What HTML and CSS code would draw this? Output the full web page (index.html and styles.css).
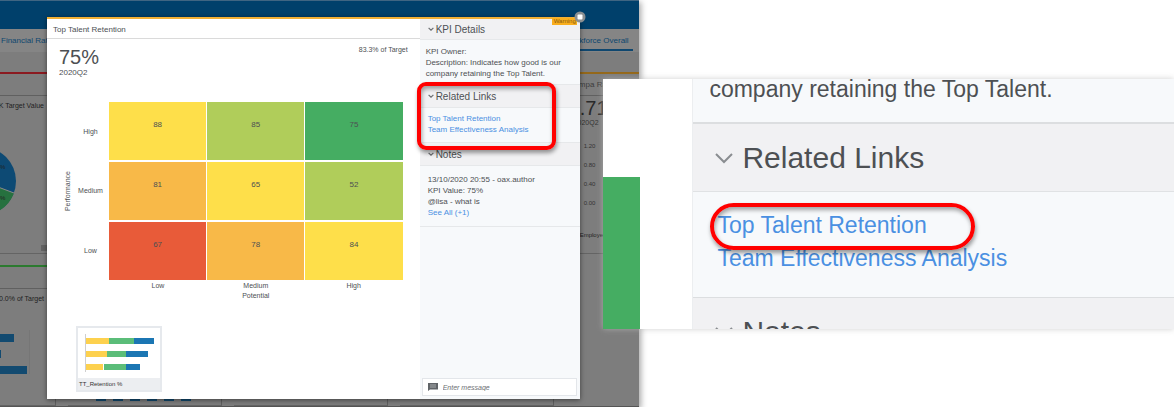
FILE: index.html
```html
<!DOCTYPE html>
<html lang="en">
<head>
<meta charset="utf-8">
<title>Top Talent Retention</title>
<link rel="stylesheet" href="styles.css">
</head>
<body>
<main class="stage">
  <section class="dashboard">
    <header class="topbar"></header>
    <nav class="tabs">
      <a class="tab" href="#">Financial Ratios</a>
      <a class="tab tab-active" href="#">Workforce Overall</a>
    </nav>
    <div class="cards">
      <article class="card card-red">
        <div class="card-title"></div>
        <p class="card-note">K Target Value</p>
        <svg class="pie" viewBox="0 0 34 64" width="34" height="64">
          <circle cx="-18" cy="32" r="34" fill="#0d4a74"/>
          <path d="M-18 32 L14 44 A34 34 0 0 1 -6 64 L-18 66Z" fill="#26713f"/>
          <path d="M-18 32 L14 44" stroke="#8a8a8a"/>
          <text x="0" y="20" font-size="6" fill="#222">%</text>
          <text x="0" y="51" font-size="6" fill="#222">%</text>
        </svg>
        <svg class="menu-icon" viewBox="0 0 6 6" width="6" height="6"><path d="M0 1H6M0 3H6M0 5H6" stroke="#4c4c4c"/></svg>
      </article>
      <article class="card card-amber">
        <div class="card-title">Compa Ratio</div>
        <p class="card-value">0.71</p>
        <p class="card-period">2020Q2</p>
        <div class="axis"><span>1.20</span><span>0.80</span><span>0.40</span><span>0.00</span></div>
        <p class="axis-name">Employee</p>
      </article>
    </div>
    <div class="cards cards-low">
      <article class="card card-green">
        <div class="card-title"></div>
        <p class="card-note">00.0% of Target</p>
        <svg class="bars" viewBox="0 0 46 44" width="46" height="44">
          <path d="M29.500 0V44" stroke="#767676"/>
          <path d="M0 4H14V12H0ZM0 20H1V28H0ZM0 36H27V44H0Z" fill="#124a70"/>
        </svg>
      </article>
      <article class="card card-green card-columns">
        <svg viewBox="0 0 140 4" width="140" height="4"><path d="M28 0H38V3H28ZM45 0H55V3H45ZM62 0H72V3H62ZM79 0H89V3H79ZM96 0H106V3H96ZM113 0H123V3H113Z" fill="#124a70"/></svg>
      </article>
      <article class="card card-green"></article>
      <article class="card card-green"></article>
    </div>

    <section class="modal" role="dialog" aria-label="Top Talent Retention">
      <div class="modal-main">
        <h1 class="modal-title">Top Talent Retention</h1>
        <div class="summary">
          <div>
            <p class="value">75%</p>
            <p class="period">2020Q2</p>
          </div>
          <p class="target">83.3% of Target</p>
        </div>
        <div class="chart">
          <div class="y-name"><span>Performance</span></div>
          <div class="y-labels"><span>High</span><span>Medium</span><span>Low</span></div>
          <div class="heatmap">
            <span class="cell yellow">88</span><span class="cell lime">85</span><span class="cell green">75</span>
            <span class="cell orange">81</span><span class="cell yellow">65</span><span class="cell lime">52</span>
            <span class="cell red">67</span><span class="cell orange">78</span><span class="cell yellow">84</span>
          </div>
          <div class="x-labels"><span>Low</span><span>Medium</span><span>High</span></div>
          <div class="x-name">Potential</div>
        </div>
        <figure class="thumb">
          <svg viewBox="0 0 82 50" width="82" height="50">
            <path d="M7.500 6V44" stroke="#cfcfcf"/>
            <path d="M8 10H31V16H8ZM8 23H29V29H8ZM8 36H25V42H8Z" fill="#fdd14e"/>
            <path d="M31 10H56V16H31ZM29 23H48V29H29ZM26 36H48V42H26Z" fill="#5bbd79"/>
            <path d="M56 10H76V16H56ZM48 23H70V29H48ZM48 36H62V42H48Z" fill="#1b76b3"/>
          </svg>
          <figcaption>TT_Retention %</figcaption>
        </figure>
      </div>
      <aside class="side">
        <section class="panel">
          <h2 class="panel-head"><svg class="chevron" viewBox="0 0 20 12"><path d="M2 2L10 10L18 2"/></svg>KPI Details</h2>
          <div class="panel-body details">
            <p>KPI Owner:</p>
            <p>Description: Indicates how good is our company retaining the Top Talent.</p>
          </div>
        </section>
        <section class="panel">
          <h2 class="panel-head"><svg class="chevron" viewBox="0 0 20 12"><path d="M2 2L10 10L18 2"/></svg>Related Links</h2>
          <div class="panel-body links">
            <a href="#">Top Talent Retention</a>
            <a href="#">Team Effectiveness Analysis</a>
          </div>
        </section>
        <section class="panel">
          <h2 class="panel-head"><svg class="chevron" viewBox="0 0 20 12"><path d="M2 2L10 10L18 2"/></svg>Notes</h2>
          <div class="panel-body notes">
            <p>13/10/2020 20:55 - oax.author</p>
            <p>KPI Value: 75%</p>
            <p>@lisa - what is</p>
            <a href="#">See All (+1)</a>
          </div>
        </section>
        <label class="message">
          <svg viewBox="0 0 10 8" width="10" height="8"><path d="M0 0H10V6.500H2L0 8Z" fill="#606468"/><path d="M2 2H8M2 4H8" stroke="#c9cccf" stroke-width=".7"/></svg>
          <input type="text" placeholder="Enter message" aria-label="Enter message">
        </label>
      </aside>
      <span class="tag">Warning</span>
      <button class="close" aria-label="Close"><svg viewBox="0 0 12 12" width="12" height="12"><circle cx="6" cy="6" r="5.500" fill="#8b8f91"/><rect x="3.500" y="3.500" width="5" height="5" rx="1" fill="#fff"/></svg></button>
      <div class="marker marker-small"></div>
    </section>
  </section>

  <section class="zoomed">
    <div class="zoomed-left"><div class="zoomed-cell"></div></div>
    <div class="zoomed-side">
      <p class="big-text">company retaining the Top Talent.</p>
      <h2 class="big-head"><svg class="chevron" viewBox="0 0 20 12"><path d="M2 2L10 10L18 2"/></svg>Related Links</h2>
      <div class="big-links">
        <a href="#">Top Talent Retention</a>
        <a href="#">Team Effectiveness Analysis</a>
        <div class="marker marker-big"></div>
      </div>
      <h2 class="big-head big-head-next"><svg class="chevron" viewBox="0 0 20 12"><path d="M2 2L10 10L18 2"/></svg>Notes</h2>
    </div>
  </section>
</main>
</body>
</html>
```

FILE: styles.css
```css
* { box-sizing: border-box; }
body, h1, h2, p, figure { margin: 0; }
body {
  font-family: "Liberation Sans", Arial, sans-serif;
  font-size: 8px;
  color: #4d5053;
  background: #fff;
}
h1, h2 { font-weight: 400; }
a { color: #4a90e2; text-decoration: none; }

.stage { position: relative; min-height: 100vh; overflow: hidden; }

/* Dimmed dashboard behind the dialog */
.dashboard {
  position: relative;
  display: flex;
  flex-direction: column;
  width: 54.4%;
  min-height: 100vh;
  background: #7d7d7d;
  border-bottom: 1px solid #555;
  box-shadow: 2px 2px 6px rgba(0, 0, 0, .35);
}
.topbar { height: 29px; background: #00406b; border-top: 1px solid #3f6582; }
.tabs {
  display: flex;
  justify-content: space-between;
  height: 23px;
  padding: 0 6px 0 1px;
  background: #858585;
}
.tab { padding-top: 6px; height: 22px; line-height: 12px; color: #0f476f; }
.tab-active { padding-right: 4px; border-bottom: 2px solid #0f476f; }
.cards { display: flex; justify-content: space-between; margin-top: 20px; }
.card { width: 67px; height: 182px; border-top: 2px solid; border-bottom: 1px solid #646464; }
.card-red { position: relative; border-top-color: #8b1a20; }
.card-amber { width: 70px; border-top-color: #94681a; }
.card-green { border-top-color: #2b7a2f; }
.card-title { height: 22px; line-height: 22px; border-bottom: 1px solid #606060; color: #3c3c3c; white-space: nowrap; }
.card-note { display: flex; justify-content: flex-end; width: 44px; padding-top: 5px; line-height: 10px; font-size: 7px; color: #222; white-space: nowrap; }
.card-value { padding-top: 1px; font-size: 20px; line-height: 22px; color: #2a2a2a; }
.card-period { padding-left: 5px; line-height: 8px; font-size: 7px; color: #333; }
.pie { display: block; margin-top: 38px; overflow: hidden; }
.menu-icon { position: absolute; left: 41px; bottom: 2px; }
.axis { display: flex; flex-direction: column; gap: 11px; padding: 15px 0 0 15px; font-size: 6px; line-height: 8px; color: #333; }
.axis-name { padding: 24px 0 0 11px; font-size: 6px; line-height: 8px; color: #222; }
.cards-low { justify-content: flex-start; gap: 12px; margin-top: 11px; flex: 1; }
.cards-low .card { flex: 0 0 154px; height: auto; border-right: 1px solid #606060; }
.cards-low .card:first-child { flex-basis: 56px; }
.card-columns { display: flex; align-items: flex-end; padding-bottom: 3px; }
.bars { display: block; margin-top: 26px; }

/* KPI dialog */
.modal {
  position: absolute;
  left: 47px;
  right: 59px;
  top: 17px;
  bottom: 7px;
  display: flex;
  background: #fff;
  border-top: 2px solid #f2b035;
  box-shadow: 0 1px 5px rgba(0, 0, 0, .5);
}
.modal-main { flex: 1; min-width: 0; }
.modal-title { height: 20px; padding: 1px 6px 0; font-size: 8px; line-height: 19px; border-bottom: 1px solid #dadada; }
.summary { display: flex; justify-content: space-between; padding: 6px 12px 0; }
.value { font-size: 20px; line-height: 24px; }
.period { font-size: 8px; line-height: 8px; }
.target { font-size: 7px; line-height: 10px; }
.chart {
  display: grid;
  grid-template-columns: 10px 34px 1fr;
  grid-template-rows: auto 12px 8px;
  column-gap: 1px;
  padding: 25px 17px 0 16px;
  font-size: 7px;
}
.y-name { display: flex; align-items: center; justify-content: center; }
.y-name span { writing-mode: vertical-rl; rotate: 180deg; line-height: 10px; }
.y-labels { display: grid; grid-template-rows: repeat(3, 1fr); align-items: center; justify-items: center; padding-right: 1px; }
.heatmap { display: grid; grid-template-columns: repeat(3, 1fr); grid-auto-rows: 58px; gap: 2px 1px; }
.cell { padding-top: 18px; text-align: center; font-size: 8px; line-height: 10px; }
.yellow { background: #fedf4a; }
.lime { background: #b0cd5a; }
.green { background: #45ad62; }
.orange { background: #f8b948; }
.red { background: #e85b39; }
.x-labels { grid-column: 3; display: grid; grid-template-columns: repeat(3, 1fr); text-align: center; line-height: 12px; }
.x-name { grid-column: 3; text-align: center; line-height: 8px; }
.thumb { width: 86px; margin: 26px 0 0 29px; border: 2px solid #e6e9ed; }
.thumb svg { display: block; }
.thumb figcaption { padding-left: 1px; font-size: 6px; line-height: 12px; color: #333; background: #eceef1; }

.side { display: flex; flex-direction: column; flex: 0 0 160px; padding-bottom: 3px; background: #f7f9fb; }
.panel-head {
  display: flex;
  align-items: center;
  gap: 2px;
  height: 24px;
  padding: 0 8px;
  font-size: 10px;
  background: #f1f1f3;
  border-top: 1px solid #e6e8ea;
  border-bottom: 1px solid #e6e8ea;
}
.panel:first-child .panel-head { height: 21px; border-top: 0; }
.chevron { width: 6px; height: 4px; fill: none; stroke: #6f7275; stroke-width: 4; }
.panel-body { line-height: 11px; }
.details { padding: 6px 6px 5px; }
.links { display: flex; flex-direction: column; padding: 5px 8px 7px; }
.notes { padding: 8px 8px 8px; border-bottom: 1px solid #e6e8ea; }
.message {
  display: flex;
  align-items: center;
  gap: 5px;
  margin: auto 3px 0 2px;
  height: 18px;
  padding: 0 5px;
  background: #fff;
  border: 1px solid #e3e6ea;
}
.message input { flex: 1; min-width: 0; padding: 0; border: 0; outline: 0; background: none; font: italic 7px "Liberation Sans", Arial, sans-serif; }
.message input::placeholder { color: #6d7073; opacity: 1; }
.tag { position: absolute; right: 3px; top: -1px; width: 25px; padding-left: 2px; font-size: 6px; line-height: 7px; color: #8a5a10; background: #f9ae1d; overflow: hidden; }
.close { position: absolute; right: -6px; top: -8px; width: 12px; height: 12px; padding: 0; border: 0; background: none; }
.close svg { display: block; }

.marker { position: absolute; border: solid #f00; box-shadow: 1px 3px 4px rgba(0, 0, 0, .4), inset 1px 3px 4px rgba(0, 0, 0, .35); pointer-events: none; }
.marker-small { right: 24px; top: 63px; width: 139px; height: 68px; border-width: 4px; border-radius: 9px; }
.marker-big { left: 17px; top: 11px; width: 265px; height: 47px; border-width: 4px; border-radius: 24px; }

/* Enlarged detail of the side panel */
.zoomed {
  position: absolute;
  left: 51.4%;
  right: 0;
  top: 79px;
  display: flex;
  height: 250px;
  overflow: hidden;
  background: #fff;
  box-shadow: 0 0 6px rgba(190, 190, 190, .7);
}
.zoomed-left { display: flex; align-items: flex-end; flex: 0 0 89px; }
.zoomed-cell { width: 37px; height: 152px; background: #45ad62; }
.zoomed-side { flex: 1; background: #f7f9fb; border-left: 1px solid #eceef0; }
.big-text { padding: 0 16px 23px; font-size: 23px; line-height: 20px; white-space: nowrap; }
.big-head {
  display: flex;
  align-items: center;
  gap: 8px;
  height: 70px;
  padding: 0 21px;
  font-size: 30px;
  background: #f1f1f3;
  border-top: 2px solid #dcdee0;
  border-bottom: 1px solid #e0e2e4;
}
.big-head .chevron { width: 20px; height: 12px; stroke: #8a8d90; stroke-width: 2; }
.big-head-next { border-top-width: 1px; }
.big-links { position: relative; display: flex; flex-direction: column; height: 105px; padding: 17px 24px 0; font-size: 23px; line-height: 33px; }
```
